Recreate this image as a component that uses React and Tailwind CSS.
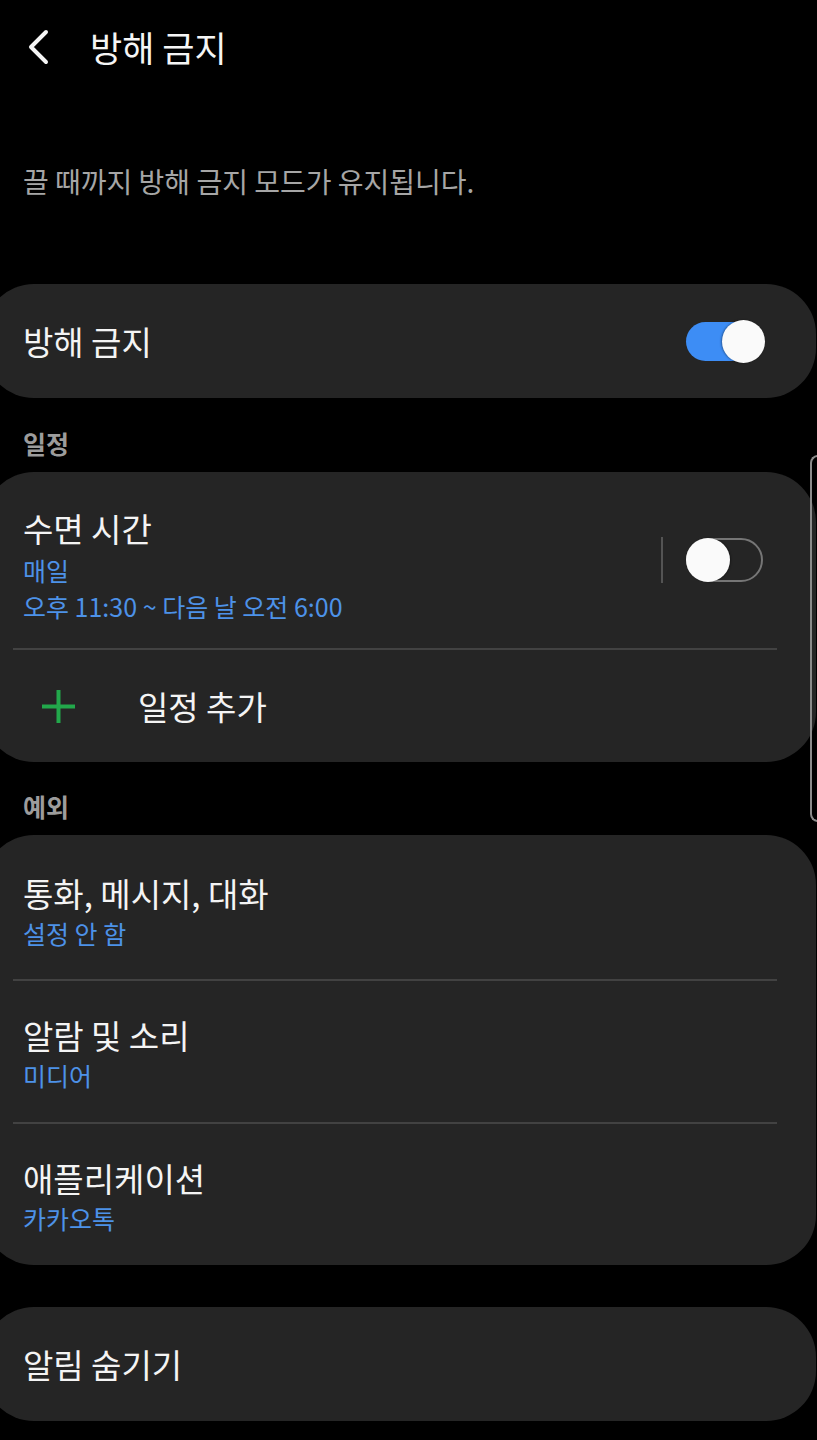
const font = { fontFamily: '"Noto Sans CJK KR", "Noto Sans", sans-serif' };

function ToggleOn() {
  return (
    <div className="relative w-[79px] h-[43px] shrink-0">
      <div className="absolute left-0 right-[6px] top-[2px] bottom-[2px] rounded-full bg-[#3d8df5]" />
      <div className="absolute right-0 top-0 w-[43px] h-[43px] rounded-full bg-[#fafafa] shadow-[-1px_0_2px_rgba(0,0,0,0.35)]" />
    </div>
  );
}

function ToggleOff() {
  return (
    <div className="relative w-[77px] h-[44px] shrink-0">
      <div className="absolute inset-0 rounded-full border-2 border-[#767676]" />
      <div className="absolute left-0 top-0 w-[44px] h-[44px] rounded-full bg-[#fafafa] shadow-[1px_0_2px_rgba(0,0,0,0.35)]" />
    </div>
  );
}

function Divider() {
  return <div className="ml-[29px] mr-[39px] h-[2px] bg-[#424242]" />;
}

function Row({ title, sub, first }) {
  return (
    <div className={`pl-[39px] pr-[52px] ${first ? "pt-[38px] pb-[30px]" : "pt-[34px] pb-[31px]"}`}>
      <div className="text-[33px] leading-[40px] text-[#f4f4f4]">{title}</div>
      <div className="mt-[4px] text-[25px] leading-[32px] text-[#4d92e8]">{sub}</div>
    </div>
  );
}

function Card({ children, className = "" }) {
  return (
    <div className={`-ml-4 w-[832px] rounded-[50px] bg-[#252525] ${className}`}>{children}</div>
  );
}

function SectionLabel({ children, className = "" }) {
  return (
    <div className={`pl-[23px] text-[25px] leading-[32px] font-bold text-[#9c9c9c] ${className}`}>
      {children}
    </div>
  );
}

export default function App() {
  return (
    <div className="relative w-full min-h-[1440px] bg-black overflow-hidden" style={font}>
      {/* header */}
      <div className="h-[94px] flex items-center pl-[26px]">
        <svg width="24" height="36" viewBox="0 0 24 36" fill="none">
          <path d="M20 3 L5 18 L20 33" stroke="#f5f5f5" strokeWidth="4" strokeLinecap="round" strokeLinejoin="round" />
        </svg>
        <div className="ml-[40px] text-[35px] leading-[44px] text-[#f5f5f5]">방해 금지</div>
      </div>

      <div className="mt-[69px] pl-[23px] text-[28px] leading-[36px] text-[#a6a6a6]">
        끌 때까지 방해 금지 모드가 유지됩니다.
      </div>

      <Card className="mt-[85px] h-[114px] flex items-center justify-between pl-[39px] pr-[51px]">
        <div className="text-[33px] leading-[40px] text-[#f4f4f4]">방해 금지</div>
        <ToggleOn />
      </Card>

      <SectionLabel className="mt-[29px]">일정</SectionLabel>

      <Card className="mt-[13px]">
        <div className="flex items-center">
          <div className="flex-1">
            <div className="pl-[39px] pt-[36px] pb-[24px]">
              <div className="text-[33px] leading-[40px] text-[#f4f4f4]">수면 시간</div>
              <div className="mt-[4px] text-[25px] leading-[36px] text-[#4d92e8]">
                매일
                <br />
                오후 11:30 ~ 다음 날 오전 6:00
              </div>
            </div>
          </div>
          <div className="flex items-center pr-[53px]">
            <div className="w-[2px] h-[46px] bg-[#545454]" />
            <div className="ml-[23px]">
              <ToggleOff />
            </div>
          </div>
        </div>
        <Divider />
        <div className="h-[112px] flex items-center pl-[58px]">
          <svg width="33" height="33" viewBox="0 0 33 33">
            <path d="M16.5 0 V33 M0 16.5 H33" stroke="#22a84b" strokeWidth="4" />
          </svg>
          <div className="ml-[63px] text-[33px] leading-[40px] text-[#f4f4f4]">일정 추가</div>
        </div>
      </Card>

      <SectionLabel className="mt-[28px]">예외</SectionLabel>

      <Card className="mt-[13px]">
        <Row first title="통화, 메시지, 대화" sub="설정 안 함" />
        <Divider />
        <Row title="알람 및 소리" sub="미디어" />
        <Divider />
        <Row title="애플리케이션" sub="카카오톡" />
      </Card>

      <Card className="mt-[42px] h-[114px] flex items-center pl-[39px]">
        <div className="text-[33px] leading-[40px] text-[#f4f4f4]">알림 숨기기</div>
      </Card>

      {/* scroll indicator */}
      <div className="absolute left-[810px] top-[455px] h-[367px] w-[12px] rounded-l-[8px] border-2 border-r-0 border-[#8a8a8a]" />
    </div>
  );
}
